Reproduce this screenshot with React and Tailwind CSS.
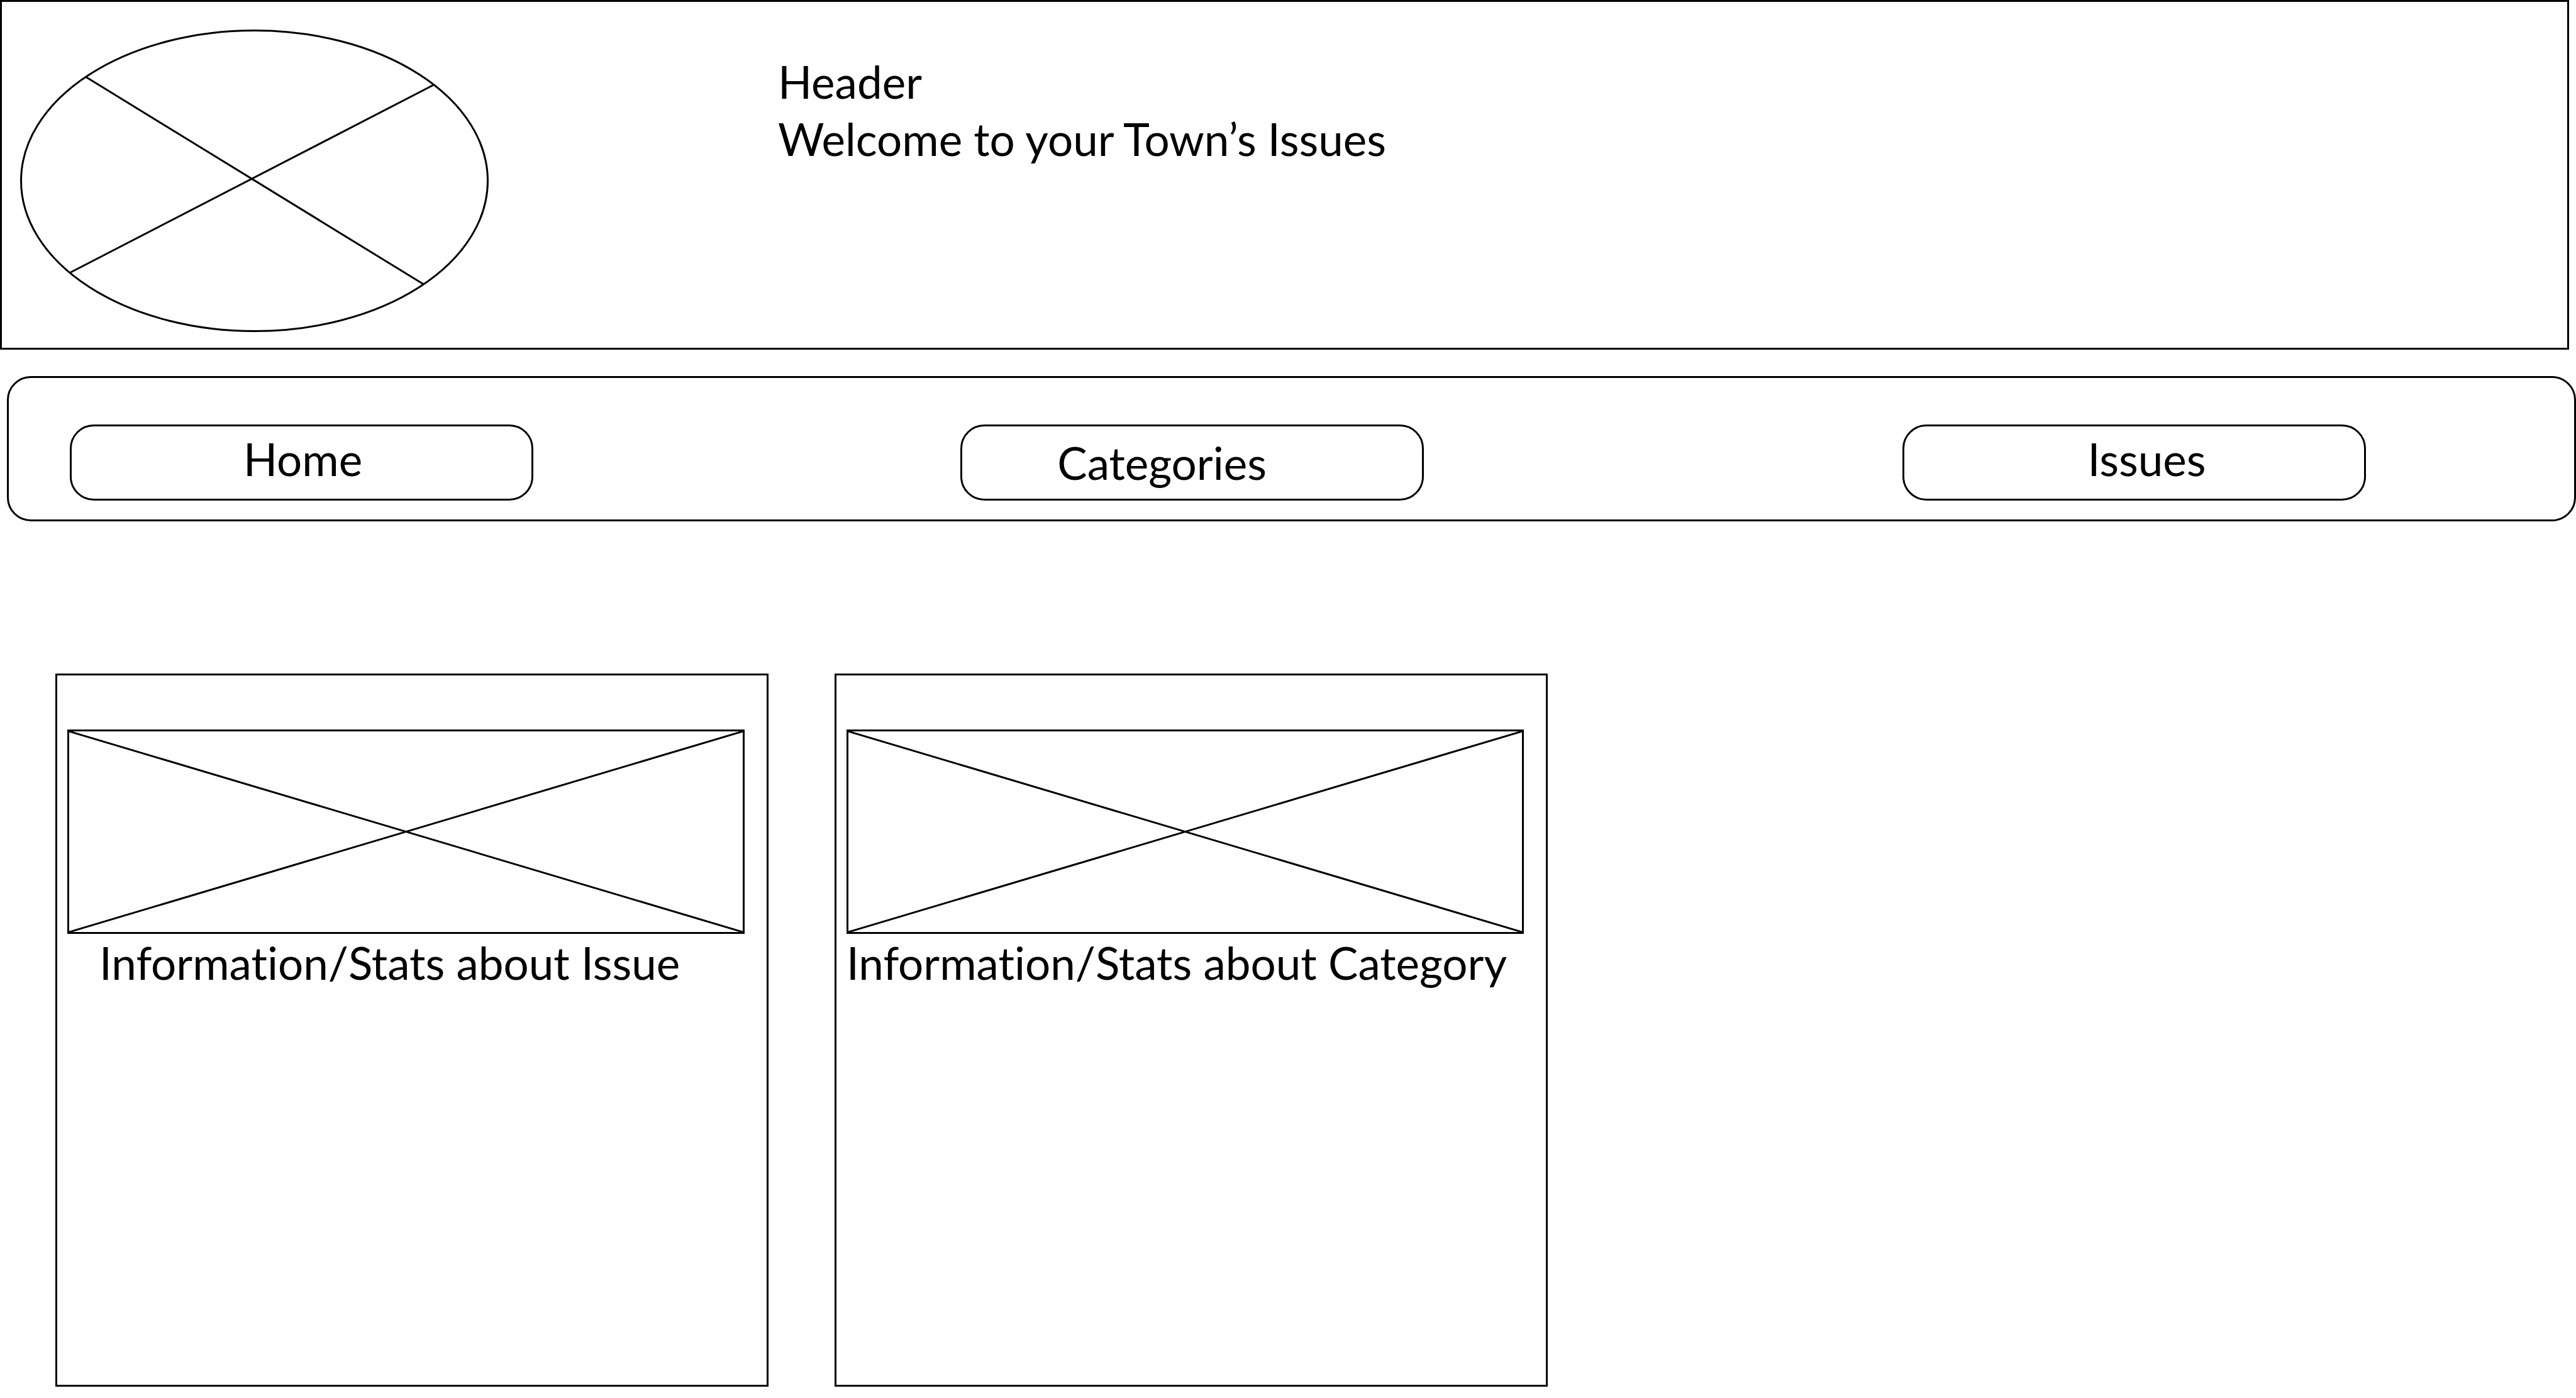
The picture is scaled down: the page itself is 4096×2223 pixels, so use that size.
const navItems = [
  { label: "Home", place: "col-start-1", inset: "pl-[273px] pb-3" },
  { label: "Categories", place: "col-start-3", inset: "pl-[151px]" },
  { label: "Issues", place: "col-start-5", inset: "pl-[291px] pb-3" },
];

const cards = [
  { title: "Information/Stats about Issue", inset: "pl-[51px]" },
  { title: "Information/Stats about Category", inset: "pl-0" },
];

function Logo() {
  return (
    <svg
      role="img"
      aria-label="Logo"
      viewBox="32 47 745 481"
      className="h-[481px] w-[745px] shrink-0"
      fill="none"
      stroke="black"
      strokeWidth="3"
    >
      <ellipse cx="404.5" cy="287.5" rx="371" ry="239" />
      <path d="M136 122 673.5 452M689.5 135 110.5 434" />
    </svg>
  );
}

function Placeholder() {
  return (
    <div className="aspect-[1077/325] w-full border-3 border-black">
      <svg
        aria-hidden="true"
        viewBox="0 0 100 100"
        preserveAspectRatio="none"
        className="block h-full w-full"
        stroke="black"
        strokeWidth="3"
      >
        <line x1="0" y1="0" x2="100" y2="100" vectorEffect="non-scaling-stroke" />
        <line x1="0" y1="100" x2="100" y2="0" vectorEffect="non-scaling-stroke" />
      </svg>
    </div>
  );
}

export default function App() {
  return (
    <div className="min-h-screen bg-white font-[Lato,sans-serif] text-[71px] leading-[91px] text-black [font-variant-ligatures:none]">
      <header className="mr-[11px] flex items-start border-3 border-black pt-11 pb-[25px] pl-[29px]">
        <Logo />
        <div className="mt-[37px] ml-[460px]">
          <h1>Header</h1>
          <p>Welcome to your Town’s Issues</p>
        </div>
      </header>

      <nav className="mt-[42px] ml-[11px] grid grid-cols-[737fr_680fr_737fr_762fr_737fr] rounded-[38px] border-3 border-black pt-[74px] pr-[331px] pb-[30px] pl-[97px]">
        {navItems.map((item) => (
          <button
            key={item.label}
            type="button"
            className={`h-[121px] rounded-[38px] border-3 border-black text-left ${item.place} ${item.inset}`}
          >
            {item.label}
          </button>
        ))}
      </nav>

      <main className="mt-[242px] grid grid-cols-[1134fr_1134fr_1530fr] gap-x-[105px] pb-4 pl-[88px]">
        {cards.map((card) => (
          <section
            key={card.title}
            className="aspect-square border-3 border-black pt-[86px] pr-[35px] pl-4"
          >
            <Placeholder />
            <h2 className={`whitespace-nowrap ${card.inset}`}>{card.title}</h2>
          </section>
        ))}
      </main>
    </div>
  );
}
